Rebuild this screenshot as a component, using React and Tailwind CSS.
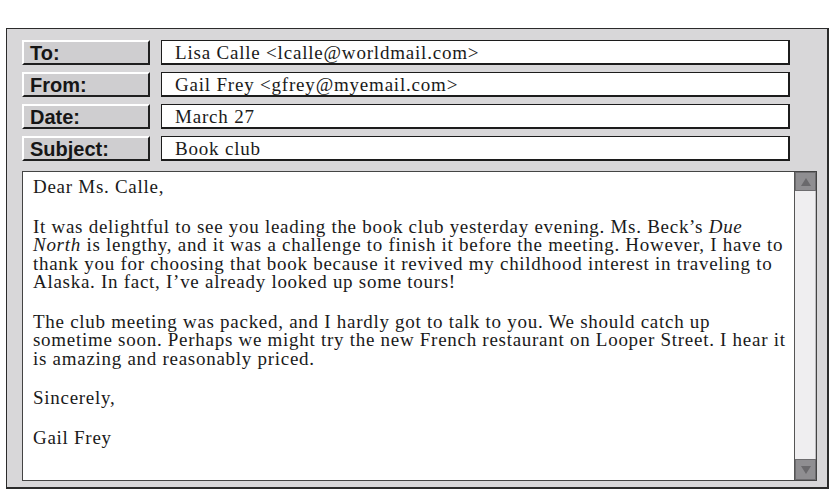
const headers = [
  { label: 'To:', value: 'Lisa Calle <lcalle@worldmail.com>' },
  { label: 'From:', value: 'Gail Frey <gfrey@myemail.com>' },
  { label: 'Date:', value: 'March 27' },
  { label: 'Subject:', value: 'Book club' },
];

function HeaderRow({ label, value }) {
  return (
    <div className="flex h-[25px] gap-[11px]">
      <div className="flex w-[128px] items-center border-t-2 border-l-2 border-b-2 border-r-2 border-t-white border-l-white border-b-[#1f1f1f] border-r-[#1f1f1f] bg-[#cfced0] pl-[6px] font-['Liberation_Sans',Arial,sans-serif] text-[20px] font-bold leading-none text-[#161616]">
        {label}
      </div>
      <div className="flex w-[629px] items-center border border-b-2 border-r-2 border-[#1c1c1c] bg-white pl-[13px] font-['Liberation_Serif','Times_New_Roman',serif] text-[19px] tracking-[0.8px] leading-none text-[#1a1a1a]">
        {value}
      </div>
    </div>
  );
}

function Triangle({ down }) {
  return (
    <svg width="10" height="8" viewBox="0 0 10 8">
      <polygon points={down ? '0,0 10,0 5,8' : '5,0 10,8 0,8'} fill="#6a696c" />
    </svg>
  );
}

function Scrollbar() {
  return (
    <div className="flex w-[22px] flex-col border-l border-[#555] bg-[#efeef0]">
      <div className="flex h-[19px] items-center justify-center border border-[#6d6c6f] bg-[#8f8e91]">
        <Triangle />
      </div>
      <div className="flex-1 border-r border-[#bdbcbf]" />
      <div className="flex h-[21px] items-center justify-center border border-[#6d6c6f] bg-[#8f8e91]">
        <Triangle down />
      </div>
    </div>
  );
}

export default function App() {
  return (
    <div className="min-h-screen bg-white pt-[28px] pl-[6px]">
      <div className="flex h-[461px] w-[823px] flex-col border border-b-2 border-r-2 border-[#2b2b2b] bg-[#d8d7d9] pt-[11px] pl-[15px]">
        <div className="flex flex-col gap-[7px]">
          {headers.map((h) => (
            <HeaderRow key={h.label} label={h.label} value={h.value} />
          ))}
        </div>

        {/* message body */}
        <div className="mt-[10px] flex h-[310px] w-[795px] border border-[#444] bg-white">
          <div className="flex-1 pt-[6px] pl-[10px] font-['Liberation_Serif','Times_New_Roman',serif] text-[19px] tracking-[0.72px] leading-[18.5px] text-[#1a1a1a] whitespace-nowrap">
            <p>Dear Ms. Calle,</p>
            <p className="mt-[21px]">
              It was delightful to see you leading the book club yesterday evening. Ms. Beck’s <i>Due</i>
              <br />
              <i>North</i> is lengthy, and it was a challenge to finish it before the meeting. However, I have to
              <br />
              thank you for choosing that book because it revived my childhood interest in traveling to
              <br />
              Alaska. In fact, I’ve already looked up some tours!
            </p>
            <p className="mt-[21px]">
              The club meeting was packed, and I hardly got to talk to you. We should catch up
              <br />
              sometime soon. Perhaps we might try the new French restaurant on Looper Street. I hear it
              <br />
              is amazing and reasonably priced.
            </p>
            <p className="mt-[21px]">Sincerely,</p>
            <p className="mt-[21px]">Gail Frey</p>
          </div>
          <Scrollbar />
        </div>
      </div>
    </div>
  );
}
